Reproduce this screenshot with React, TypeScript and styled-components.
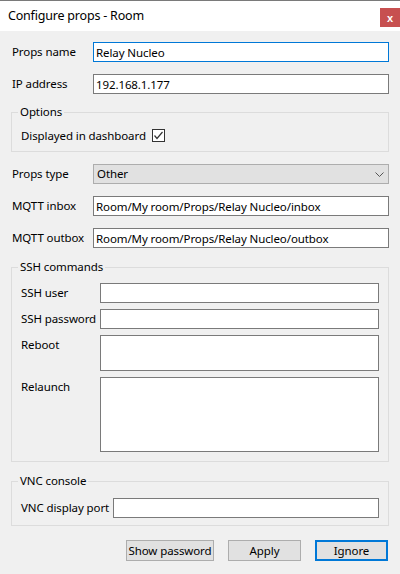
import React from "react";
import styled, { createGlobalStyle } from "styled-components";

const Global = createGlobalStyle`
  html, body { margin: 0; padding: 0; background: #f0f0f0; }
  body {
    font-family: "Segoe UI", "Noto Sans", "Open Sans", sans-serif;
    font-size: 11.5px;
    letter-spacing: -0.1px;
    color: #000;
  }
  * { box-sizing: border-box; }
`;

const Window = styled.div`
  width: 400px;
  height: 574px;
  background: #f0f0f0;
  border-top: 1px solid #7a7a7a;
  display: flex;
  flex-direction: column;
  overflow: hidden;
`;

const TitleBar = styled.div`
  height: 30px;
  flex: none;
  background: #ffffff;
  display: flex;
  align-items: flex-start;
  justify-content: space-between;
  padding-left: 8px;
`;

const Title = styled.div`
  font-size: 12.5px;
  letter-spacing: -0.2px;
  line-height: 30px;
  color: #000;
`;

const CloseButton = styled.button`
  width: 20px;
  height: 19px;
  margin-top: 7px;
  padding: 0;
  border: 0;
  background: #c75050;
  color: #fff;
  font-family: "Liberation Sans", Arial, sans-serif;
  font-weight: bold;
  font-size: 11px;
  line-height: 18px;
  display: flex;
  align-items: center;
  justify-content: center;
`;

const Body = styled.div`
  padding: 11px 11px 0;
  display: flex;
  flex-direction: column;
`;

const Row = styled.div<{ $top?: number }>`
  display: flex;
  align-items: flex-start;
  margin-top: ${(p) => p.$top ?? 0}px;
`;

const Label = styled.label<{ $w: number; $indent?: number }>`
  width: ${(p) => p.$w}px;
  flex: none;
  padding-left: ${(p) => p.$indent ?? 0}px;
  line-height: 20px;
  white-space: nowrap;
`;

const TextInput = styled.input<{ $focus?: boolean }>`
  flex: 1;
  min-width: 0;
  height: 20px;
  border: 1px solid ${(p) => (p.$focus ? "#0078d7" : "#7a7a7a")};
  background: #fff;
  padding: 0 2px;
  font: inherit;
  letter-spacing: inherit;
  color: #000;
  outline: none;
`;

const TextArea = styled.textarea<{ $h: number }>`
  flex: 1;
  min-width: 0;
  height: ${(p) => p.$h}px;
  border: 1px solid #7a7a7a;
  background: #fff;
  padding: 1px 2px;
  font: inherit;
  resize: none;
  outline: none;
  display: block;
`;

const Combo = styled.div`
  flex: 1;
  height: 20px;
  border: 1px solid #adadad;
  background: #e1e1e1;
  display: flex;
  align-items: center;
  justify-content: space-between;
  padding: 0 4px 0 3px;
  line-height: 18px;
`;

const Group = styled.fieldset<{ $top: number; $bottom: number }>`
  margin: ${(p) => p.$top}px 0 0;
  padding: 0 9px ${(p) => p.$bottom}px;
  border: 1px solid #dcdcdc;
  min-width: 0;
`;

const Legend = styled.legend`
  margin-left: -3px;
  padding: 0 2px;
  line-height: 16px;
`;

const CheckRow = styled.div`
  display: flex;
  align-items: center;
  height: 20px;
  margin-top: 5px;
  gap: 6px;
`;

const CheckBox = styled.span`
  width: 13px;
  height: 13px;
  border: 1px solid #333;
  background: #fff;
  display: flex;
  align-items: center;
  justify-content: center;
`;

const ButtonBar = styled.div`
  display: flex;
  justify-content: flex-end;
  gap: 14px;
  margin-top: 14px;
  padding-right: 1px;
`;

const Button = styled.button<{ $w: number; $default?: boolean }>`
  width: ${(p) => p.$w}px;
  height: 21px;
  padding: 0;
  background: #e1e1e1;
  border: ${(p) => (p.$default ? "2px solid #0078d7" : "1px solid #adadad")};
  font: inherit;
  letter-spacing: inherit;
  color: #000;
  line-height: 17px;
  white-space: nowrap;
`;

export default function App() {
  return (
    <>
      <Global />
      <Window>
        <TitleBar>
          <Title>Configure props - Room</Title>
          <CloseButton>x</CloseButton>
        </TitleBar>
        <Body>
          <Row>
            <Label $w={82} $indent={1}>Props name</Label>
            <TextInput $focus defaultValue="Relay Nucleo" />
          </Row>
          <Row $top={12}>
            <Label $w={82} $indent={1}>IP address</Label>
            <TextInput defaultValue="192.168.1.177" />
          </Row>
          <Group $top={10} $bottom={6}>
            <Legend>Options</Legend>
            <CheckRow>
              <span>Displayed in dashboard</span>
              <CheckBox>
                <svg width="11" height="11" viewBox="0 0 11 11">
                  <polyline points="1.5,5.5 4,8.5 9.5,2" fill="none" stroke="#333" strokeWidth="1.2" />
                </svg>
              </CheckBox>
            </CheckRow>
          </Group>
          <Row $top={12}>
            <Label $w={82} $indent={1}>Props type</Label>
            <Combo>
              <span>Other</span>
              <svg width="9" height="5" viewBox="0 0 9 5">
                <polyline points="0.5,0.5 4.5,4.5 8.5,0.5" fill="none" stroke="#555" strokeWidth="1" />
              </svg>
            </Combo>
          </Row>
          <Row $top={12}>
            <Label $w={82} $indent={1}>MQTT inbox</Label>
            <TextInput defaultValue="Room/My room/Props/Relay Nucleo/inbox" />
          </Row>
          <Row $top={12}>
            <Label $w={82} $indent={1}>MQTT outbox</Label>
            <TextInput defaultValue="Room/My room/Props/Relay Nucleo/outbox" />
          </Row>
          <Group $top={11} $bottom={9}>
            <Legend>SSH commands</Legend>
            <Row $top={8}>
              <Label $w={79}>SSH user</Label>
              <TextInput />
            </Row>
            <Row $top={6}>
              <Label $w={79}>SSH password</Label>
              <TextInput />
            </Row>
            <Row $top={6}>
              <Label $w={79}>Reboot</Label>
              <TextArea $h={36} />
            </Row>
            <Row $top={6}>
              <Label $w={79}>Relaunch</Label>
              <TextArea $h={75} />
            </Row>
          </Group>
          <Group $top={11} $bottom={7}>
            <Legend>VNC console</Legend>
            <Row $top={9}>
              <Label $w={92}>VNC display port</Label>
              <TextInput />
            </Row>
          </Group>
          <ButtonBar>
            <Button $w={88}>Show password</Button>
            <Button $w={73}>Apply</Button>
            <Button $w={73} $default>Ignore</Button>
          </ButtonBar>
        </Body>
      </Window>
    </>
  );
}
